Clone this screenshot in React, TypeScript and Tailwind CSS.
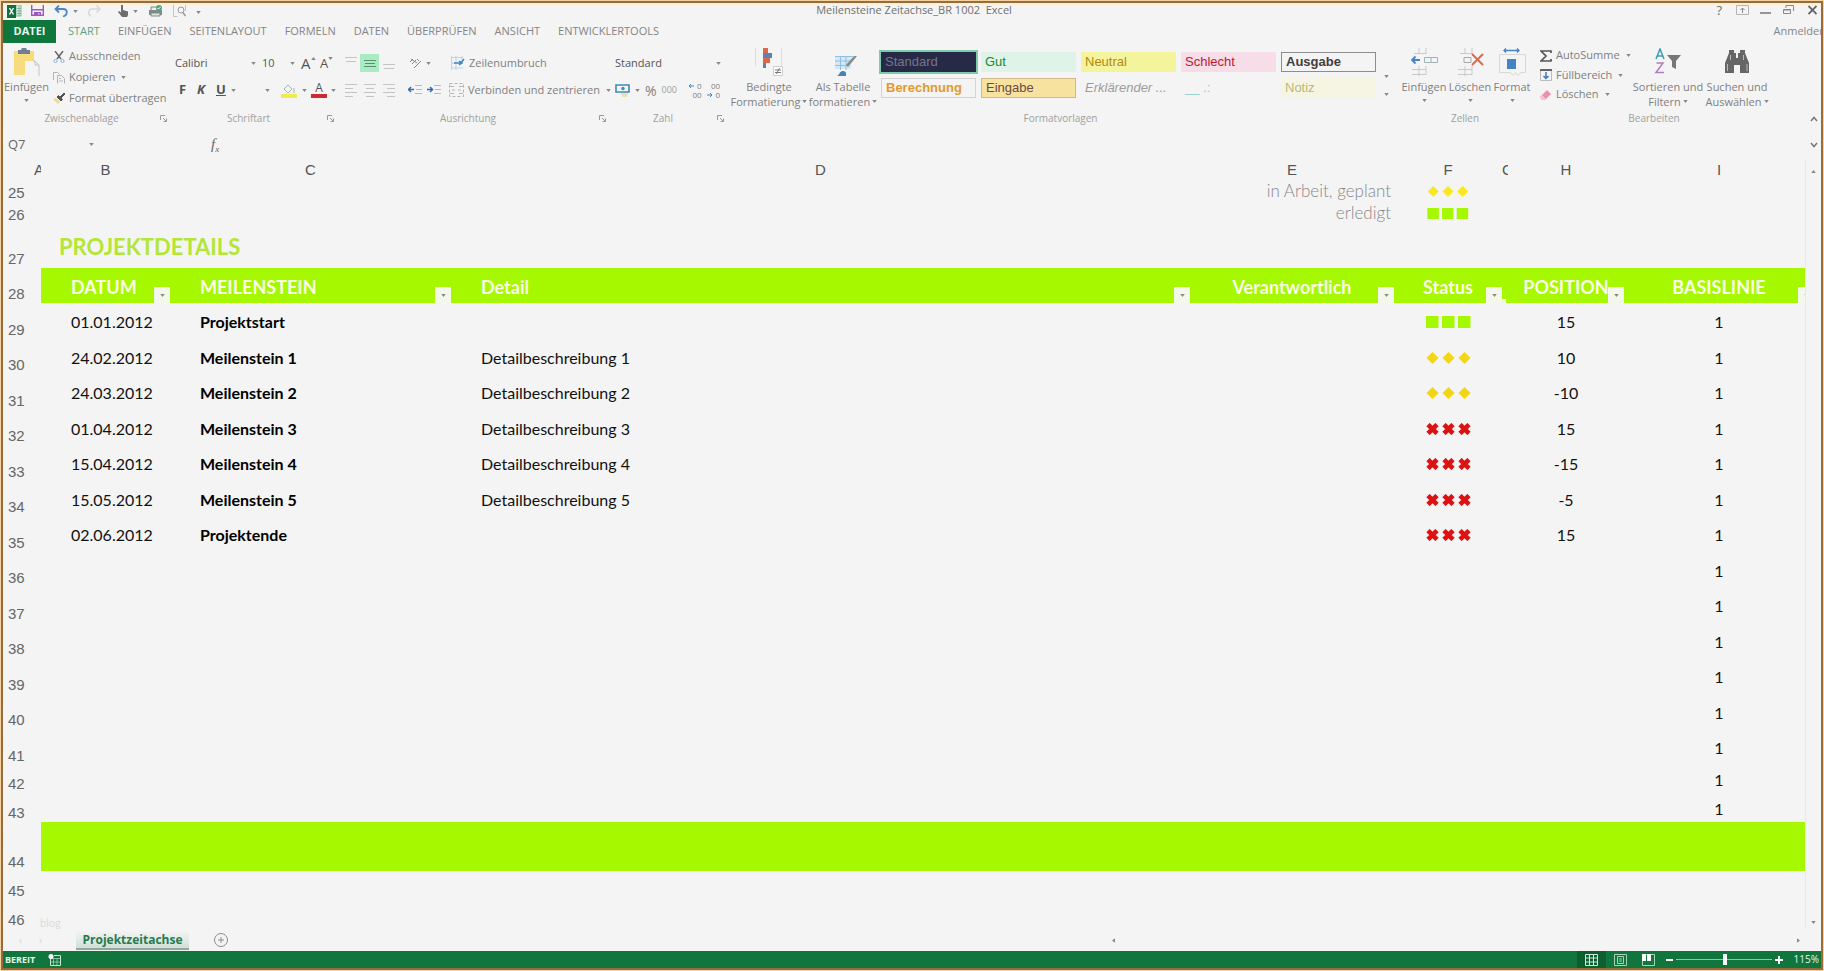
import React from 'react';
import clsx from 'clsx';

type Status = 'done' | 'planned' | 'late';

interface Milestone {
    row: number;
    date?: string;
    name?: string;
    detail?: string;
    status?: Status;
    position?: string;
    height: string;
}

const milestones: Milestone[] = [
    { row: 29, date: '01.01.2012', name: 'Projektstart', status: 'done', position: '15', height: 'h-[36px]' },
    { row: 30, date: '24.02.2012', name: 'Meilenstein 1', detail: 'Detailbeschreibung 1', status: 'planned', position: '10', height: 'h-[35px]' },
    { row: 31, date: '24.03.2012', name: 'Meilenstein 2', detail: 'Detailbeschreibung 2', status: 'planned', position: '-10', height: 'h-[36px]' },
    { row: 32, date: '01.04.2012', name: 'Meilenstein 3', detail: 'Detailbeschreibung 3', status: 'late', position: '15', height: 'h-[35px]' },
    { row: 33, date: '15.04.2012', name: 'Meilenstein 4', detail: 'Detailbeschreibung 4', status: 'late', position: '-15', height: 'h-[36px]' },
    { row: 34, date: '15.05.2012', name: 'Meilenstein 5', detail: 'Detailbeschreibung 5', status: 'late', position: '-5', height: 'h-[35px]' },
    { row: 35, date: '02.06.2012', name: 'Projektende', status: 'late', position: '15', height: 'h-[36px]' },
    { row: 36, height: 'h-[35px]' },
    { row: 37, height: 'h-[36px]' },
    { row: 38, height: 'h-[35px]' },
    { row: 39, height: 'h-[36px]' },
    { row: 40, height: 'h-[35px]' },
    { row: 41, height: 'h-[36px]' },
    { row: 42, height: 'h-[28px]' },
    { row: 43, height: 'h-[29px]' },
];

const tabs = ['START', 'EINFÜGEN', 'SEITENLAYOUT', 'FORMELN', 'DATEN', 'ÜBERPRÜFEN', 'ANSICHT', 'ENTWICKLERTOOLS'];

const cellStyles = [
    { label: 'Standard', look: 'bg-[#262a47] text-[#77768a] outline-2 outline-[#7fc9ac]' },
    { label: 'Gut', look: 'bg-[#e0f3e8] text-[#178a2c]' },
    { label: 'Neutral', look: 'bg-[#f4f49c] text-[#b08a10]' },
    { label: 'Schlecht', look: 'bg-[#f6dde8] text-[#bd1730]' },
    { label: 'Ausgabe', look: 'border border-[#8d8d8d] font-bold text-[#3f3f3f]' },
    { label: 'Berechnung', look: 'border border-[#d4d4d4] font-bold text-[#e39a2b]' },
    { label: 'Eingabe', look: 'border border-[#cdb98a] bg-[#f7e2a0] text-[#6b4a45]' },
    { label: 'Erklärender ...', look: 'italic text-[#9c9c9c]' },
    { label: '__ .:', look: 'text-[#8fcac5] text-[10px]' },
    { label: 'Notiz', look: 'bg-[#f6f5e3] text-[#b9b878]' },
];

const Caret: React.FC<{ className?: string }> = ({ className }) => (
    <svg viewBox="0 0 6 4" className={clsx('h-[3px] w-[5px] shrink-0', className)} fill="#888">
        <path d="M0 0h6L3 4z" />
    </svg>
);

const Marks: React.FC<{ status: Status; className?: string; color?: string }> = ({ status, className = 'h-[12px] w-[45px]', color }) => {
    const xs = [0, 16, 32];
    if (status === 'done') {
        return (
            <svg viewBox="0 0 45 12" className={className} fill={color || '#a6f800'}>
                {xs.map(x => <rect key={x} x={x} width="12.5" height="12" />)}
            </svg>
        );
    }
    if (status === 'planned') {
        return (
            <svg viewBox="0 0 45 12" className={className} fill={color || '#f3d515'}>
                {xs.map(x => <path key={x} d={`M${x + 6.5} 0l6 6-6 6-6-6z`} />)}
            </svg>
        );
    }
    return (
        <svg viewBox="0 0 45 12" className={className} stroke={color || '#dd1313'} strokeWidth="4.6">
            {xs.map(x => <path key={x} d={`M${x + 2} 1.5l9 9M${x + 11} 1.5l-9 9`} />)}
        </svg>
    );
};

const Launcher: React.FC = () => (
    <svg viewBox="0 0 7 7" className="h-[7px] w-[7px]" stroke="#999" fill="none">
        <path d="M.5 5V.5H5M3 3l3 3M6.500 3.500v3h-3" />
    </svg>
);

const Group: React.FC<{ label: string; width: string; pad?: string; launcher?: boolean; children: React.ReactNode }> = ({ label, width, pad, launcher, children }) => (
    <section className={clsx('flex shrink-0 flex-col', width)}>
        <div className={clsx('flex h-[67px]', pad)}>{children}</div>
        <div className="flex h-4 items-center text-[10px] text-[#a0a0a0]">
            <span className="grow text-center">{label}</span>
            {launcher && <button aria-label={`${label} Optionen`} className="mr-[3px]"><Launcher /></button>}
        </div>
    </section>
);

const BigButton: React.FC<{ width: string; icon: React.ReactNode; lines: string[]; caretBelow?: boolean }> = ({ width, icon, lines, caretBelow }) => (
    <button className={clsx('flex shrink-0 flex-col items-center pt-[5px] whitespace-nowrap leading-[15px]', width)}>
        <span className="mb-[3px] h-7">{icon}</span>
        {lines.map((l, i) => (
            <span key={l} className="flex items-center gap-[2px]">
                {l}
                {!caretBelow && i === lines.length - 1 && <Caret />}
            </span>
        ))}
        {caretBelow && <Caret className="mt-[5px]" />}
    </button>
);

const SmallButton: React.FC<{ icon: React.ReactNode; label: string; caret?: boolean; className?: string }> = ({ icon, label, caret, className }) => (
    <button className={clsx('flex items-center gap-1 whitespace-nowrap', className)}>
        {icon}
        {label}
        {caret && <Caret className="ml-[2px]" />}
    </button>
);

const AlignIcon: React.FC<{ d: string; label: string; active?: boolean }> = ({ d, label, active }) => (
    <button aria-label={label} className={clsx('flex h-[18px] w-[19px] items-center justify-center', active && 'bg-[#a9ecc4]')}>
        <svg viewBox="0 0 12 16" className="h-4 w-3" stroke={active ? '#5c8f72' : '#c4c4c4'}><path d={d} /></svg>
    </button>
);

const TitleBar: React.FC = () => (
    <header className="flex h-[17px] items-start border-t-2 border-[#fdf0dc] pl-1 text-[#707070]">
        <div className="flex w-[300px] items-start">
            <svg viewBox="0 0 15 13" className="mr-[9px] h-[13px] w-[15px]">
                <path d="M9 0h5v11H9z" fill="#dff0e5" stroke="#7fb896" />
                <path d="M10 3.500h4M10 6h4M10 8.500h4M12 1v10" stroke="#7fb896" />
                <path d="M0 0h9v13H0z" fill="#12703c" />
                <path d="M2.500 3l4 6.500M6.500 3l-4 6.500" stroke="#fff" strokeWidth="1.400" />
            </svg>
            <svg viewBox="0 0 13 11" className="mr-[10px] h-[11px] w-[13px]">
                <path d="M.7 0v10.300h11.600V0" fill="none" stroke="#9b59c0" strokeWidth="1.400" />
                <path d="M1 4h11v1.500H1zM3 7h7v4H8.500V8.500H7V11H3z" fill="#9b59c0" />
            </svg>
            <svg viewBox="0 0 14 12" className="mr-[5px] h-3 w-[14px]" fill="none" stroke="#4c86c6" strokeWidth="1.800">
                <path d="M5 .5L1.500 4 5 7.500M2 4h7c5 0 5 6 0 7.500" />
            </svg>
            <Caret className="mt-[5px] mr-[10px]" />
            <svg viewBox="0 0 13 12" className="mr-[17px] h-3 w-[13px]" fill="none" stroke="#d8d8d8" strokeWidth="1.500">
                <path d="M8.500 .5L12 4 8.500 7.500M11 4H4C0 4 0 10 3 11" />
            </svg>
            <svg viewBox="0 0 10 12" className="mr-[5px] h-3 w-[10px]" fill="#6d6d6d">
                <path d="M3 0h2v5l5 1.500V10l-1 2H4L0 7l1-1 2 1.500z" />
            </svg>
            <Caret className="mt-[5px] mr-[10px]" />
            <svg viewBox="0 0 15 12" className="mr-[10px] h-3 w-[15px]">
                <path d="M1 5h13v5H1z" fill="#808b88" />
                <path d="M3 5V2h6M3 8h9v3H3z" fill="#dfe5e3" stroke="#808b88" />
                <circle cx="11" cy="3" r="3" fill="#58a57c" />
                <path d="M9.500 3l1 1 2-2" stroke="#fff" fill="none" />
            </svg>
            <svg viewBox="0 0 13 12" className="mr-[10px] h-3 w-[13px]" fill="none" stroke="#9a9a9a">
                <path d="M.5 0v11.500h4M12.500 0v6" stroke="#c5c5c5" />
                <circle cx="8" cy="5" r="3" />
                <path d="M10 7.500l2.500 3.500" strokeWidth="1.500" />
            </svg>
            <Caret className="mt-[6px]" />
        </div>
        <h1 className="grow text-center text-[11px] leading-[10px] whitespace-pre">Meilensteine Zeitachse_BR 1002  Excel</h1>
        <div className="flex w-[300px] items-start justify-end pr-1">
            <button aria-label="Hilfe" className="mr-[14px] text-[13px] leading-[10px]">?</button>
            <button aria-label="Menüband-Anzeigeoptionen" className="mr-[11px]">
                <svg viewBox="0 0 13 10" className="h-[10px] w-[13px]" fill="none" stroke="#888"><path d="M.5.500h12v9H.5z" stroke="#b5b5b5" /><path d="M6.500 8V3M4.500 5l2-2 2 2" /></svg>
            </button>
            <button aria-label="Minimieren" className="mr-[12px]">
                <svg viewBox="0 0 11 10" className="h-[10px] w-[11px]" stroke="#777" strokeWidth="1.500"><path d="M0 8h11" /></svg>
            </button>
            <button aria-label="Wiederherstellen" className="mr-[14px]">
                <svg viewBox="0 0 11 10" className="h-[10px] w-[11px]" fill="none" stroke="#888"><path d="M3 3V.5h7.500V6M.5 4.500h7v4h-7zM.5 5h7" /></svg>
            </button>
            <button aria-label="Schließen">
                <svg viewBox="0 0 9 10" className="h-[10px] w-[9px]" stroke="#666" strokeWidth="1.800"><path d="M.5 1l8 8M8.500 1l-8 8" /></svg>
            </button>
        </div>
    </header>
);

const PasteIcon = (
    <svg viewBox="0 0 28 28" className="h-7 w-7">
        <path d="M1 3h20v11h-9v13H1z" fill="#f6dc7c" />
        <path d="M5 2h3c0-3 6-3 6 0h3v4H5z" fill="#6f7f95" />
        <path d="M12 13h10l4 4v11H12z" fill="#f4f4f4" />
        <path d="M20 13h2l4 4v11M22 13v4h4" fill="none" stroke="#c4c4c4" />
    </svg>
);

const CellsGrid = ({ children }: { children: React.ReactNode }) => (
    <svg viewBox="0 0 27 28" className="h-7 w-[27px]" fill="none">
        <path d="M3 5.500h12M8 0v6M15 0v6M1 21.500h14M1 26.500h14M8 18v10M15 18v9" stroke="#c9c9c9" />
        {children}
    </svg>
);

const Ribbon: React.FC = () => (
    <div className="flex h-[88px] shrink-0 text-[11px] text-[#808080]">
        <Group label="Zwischenablage" width="w-[167px]" launcher>
            <BigButton width="w-[47px]" icon={PasteIcon} lines={['Einfügen']} caretBelow />
            <div className="flex flex-col items-start pt-[3px] pl-[3px]">
                <SmallButton className="h-[21px]" label="Ausschneiden" icon={
                    <svg viewBox="0 0 12 12" className="h-3 w-3" fill="none">
                        <path d="M2 0l6 8M10 0L4 8" stroke="#666" strokeWidth="1.500" />
                        <circle cx="2.500" cy="10" r="1.600" stroke="#8fb4d8" /><circle cx="9.500" cy="10" r="1.600" stroke="#8fb4d8" />
                    </svg>
                } />
                <SmallButton className="h-[21px]" label="Kopieren" caret icon={
                    <svg viewBox="0 0 12 12" className="h-3 w-3" fill="none" stroke="#b3b3b3"><path d="M.5 8V.5h4l2 2M4.500 11.500v-8h4l3 3v5M6 6.500h2M6 9h4" /></svg>
                } />
                <SmallButton className="h-[21px]" label="Format übertragen" icon={
                    <svg viewBox="0 0 12 12" className="h-3 w-3"><path d="M0 6l5 5 2-2-4-4z" fill="#f2d98a" /><path d="M4 4l4 4 1.500-1.500-4-4zM7 4l4-4 1 1-4 4z" fill="#555" stroke="#555" /></svg>
                } />
            </div>
        </Group>
        <Group label="Schriftart" width="w-[167px]" launcher>
            <div className="flex flex-col pt-[9px] pl-[5px]">
                <div className="flex h-[22px] items-center text-[#555]">
                    <div className="flex w-[87px] items-center">
                        <select aria-label="Schriftart" className="w-[76px] appearance-none outline-none"><option>Calibri</option></select>
                        <Caret />
                    </div>
                    <div className="flex w-[39px] items-center">
                        <select aria-label="Schriftgrad" className="w-[28px] appearance-none outline-none"><option>10</option></select>
                        <Caret />
                    </div>
                    <button aria-label="Schriftgrad vergrößern" className="flex w-[19px] items-start text-[15px] leading-4">A<Caret className="mt-[2px] rotate-180" /></button>
                    <button aria-label="Schriftgrad verkleinern" className="flex items-start text-[13px] leading-4">A<Caret className="mt-[2px]" /></button>
                </div>
                <div className="flex h-[32px] items-center text-[13px] font-bold text-[#555]">
                    <button className="w-[22px] pl-1 text-left">F</button>
                    <button className="w-[19px] text-left italic">K</button>
                    <button className="w-[15px] text-left underline">U</button>
                    <Caret className="mr-[29px]" />
                    <Caret className="mr-[11px]" />
                    <button aria-label="Füllfarbe" className="mr-[5px]">
                        <svg viewBox="0 0 16 15" className="h-[15px] w-4"><path d="M3 6l4-4 4 4-4 4zM13 5v5" fill="none" stroke="#a9b3bd" /><path d="M0 11h16v4H0z" fill="#eeee4a" /></svg>
                    </button>
                    <Caret className="mr-[4px]" />
                    <button className="flex h-[16px] w-4 flex-col items-center border-b-4 border-[#cc2a30] text-[12px] leading-3 font-normal">A</button>
                    <Caret className="ml-[4px]" />
                </div>
            </div>
        </Group>
        <Group label="Ausrichtung" width="w-[272px]" launcher>
            <div className="flex flex-col pt-[9px] pl-[4px]">
                <div className="flex h-[22px] items-center">
                    <AlignIcon label="Oben ausrichten" d="M0 2.500h12M1 6.500h10" />
                    <AlignIcon label="Zentriert ausrichten" active d="M0 5.500h12M1 8.500h10M0 11.500h12" />
                    <AlignIcon label="Unten ausrichten" d="M0 9.500h12M1 13.500h10" />
                    <button aria-label="Ausrichtung" className="ml-[11px] flex w-[41px] items-center gap-[5px]">
                        <svg viewBox="0 0 12 12" className="h-3 w-3" fill="none" stroke="#888"><path d="M1 5l3-3M3 7l4-4M2 2l6 4M5 11l7-7M8 2l2 2" /></svg>
                        <Caret />
                    </button>
                    <SmallButton label="Zeilenumbruch" icon={
                        <svg viewBox="0 0 15 14" className="h-[14px] w-[15px]" fill="none"><path d="M1 1.500h12M1 7h5M1 12h12M1.500 0v14M6 0v14M12 0v5" stroke="#bcd3e6" /><path d="M4 7h7l3-4M9 5l3 2-3 2" stroke="#3f83c4" strokeWidth="1.400" /></svg>
                    } />
                </div>
                <div className="flex h-[32px] items-center">
                    <AlignIcon label="Linksbündig" d="M0 2.500h12M0 6.500h8M0 10.500h12M0 14.500h8" />
                    <AlignIcon label="Zentriert" d="M0 2.500h12M2 6.500h8M0 10.500h12M2 14.500h8" />
                    <AlignIcon label="Rechtsbündig" d="M0 2.500h12M4 6.500h8M0 10.500h12M4 14.500h8" />
                    <button aria-label="Einzug verkleinern" className="ml-[10px]">
                        <svg viewBox="0 0 14 12" className="h-3 w-[14px]" stroke="#bbb"><path d="M7 1.500h7M8 5.500h6M7 9.500h7" /><path d="M0 5.500h6M3 3L.5 5.500 3 8" stroke="#2f6fb0" strokeWidth="1.500" fill="none" /></svg>
                    </button>
                    <button aria-label="Einzug vergrößern" className="mr-[8px] ml-[5px]">
                        <svg viewBox="0 0 14 12" className="h-3 w-[14px]" stroke="#bbb"><path d="M7 1.500h7M8 5.500h6M7 9.500h7" /><path d="M0 5.500h6M3 3l2.500 2.500L3 8" stroke="#2f6fb0" strokeWidth="1.500" fill="none" /></svg>
                    </button>
                    <SmallButton label="Verbinden und zentrieren" caret icon={
                        <svg viewBox="0 0 15 14" className="h-[14px] w-[15px]" fill="none" stroke="#b5b5b5"><path d="M.5.500h14v13H.5z" strokeDasharray="3 2" /><path d="M1 3.500h4M10 3.500h4M1 10.500h4M10 10.500h4M3 7h3M9 7h3" /></svg>
                    } />
                </div>
            </div>
        </Group>
        <Group label="Zahl" width="w-[118px]" launcher>
            <div className="flex flex-col pt-[9px] pl-[6px]">
                <div className="flex h-[22px] items-center text-[#555]">
                    <select aria-label="Zahlenformat" className="w-[101px] appearance-none outline-none"><option>Standard</option></select>
                    <Caret />
                </div>
                <div className="flex h-[32px] items-center">
                    <svg viewBox="0 0 16 14" className="mr-[4px] h-[14px] w-4" fill="none"><path d="M1 2h13v7H1z" stroke="#3c8bb8" strokeWidth="1.600" /><circle cx="8" cy="5.500" r="1.700" fill="#3c8bb8" /><path d="M6 11h7M7 13h5" stroke="#ecd9a0" strokeWidth="1.500" /></svg>
                    <Caret className="mr-[5px]" />
                    <button className="mr-[5px] text-[14px]">%</button>
                    <button className="mr-[11px] text-[9px] text-[#a0a0a0]">000</button>
                    <button aria-label="Dezimalstelle hinzufügen" className="mr-[5px] flex flex-col items-end text-[8px] leading-[9px]">
                        <span className="flex items-center gap-[3px]"><svg viewBox="0 0 6 6" className="h-[6px] w-[6px]" fill="none" stroke="#3f83c4"><path d="M6 3H1M3 1L1 3l2 2" /></svg>0</span>
                        <span>00</span>
                    </button>
                    <button aria-label="Dezimalstelle löschen" className="flex flex-col items-end text-[8px] leading-[9px]">
                        <span>00</span>
                        <span className="flex items-center gap-[3px]"><svg viewBox="0 0 6 6" className="h-[6px] w-[6px]" fill="none" stroke="#3f83c4"><path d="M0 3h5M3 1l2 2-2 2" /></svg>0</span>
                    </button>
                </div>
            </div>
        </Group>
        <Group label="Formatvorlagen" width="w-[667px]">
            <BigButton width="w-[84px]" lines={['Bedingte', 'Formatierung']} icon={
                <svg viewBox="0 0 28 28" className="h-7 w-7">
                    <path d="M.5 0v18M26.500 0v18" stroke="#ddd" />
                    <path d="M8 0h5v5H8zM8 10h7v5H8z" fill="#d9694a" /><path d="M8 5h9v5H8zM8 15h3v5H8z" fill="#5f7fb5" />
                    <path d="M18.500 18.500h9v9h-9z" fill="#fff" stroke="#ccc" /><path d="M20 22h6M20 24.500h6M24.500 20l-3 6" stroke="#777" />
                </svg>
            } />
            <BigButton width="w-[64px]" lines={['Als Tabelle', 'formatieren']} icon={
                <svg viewBox="0 0 28 28" className="h-7 w-7">
                    <path d="M6 8h16v13H6z" fill="#d4e8f6" /><path d="M6 8.500h18M6 13h16M6 17.500h13M11.500 8v14M17 8v14" stroke="#90bfe0" fill="none" />
                    <path d="M28 8l-9 11-2-2L25 8z" fill="#858a8c" /><path d="M8 28c3-1 2-5 6-5 4 0 3 4 3 5z" fill="#4382bd" />
                </svg>
            } />
            <div className="ml-[6px] grid w-[500px] grid-cols-5 content-start gap-y-[6px] pt-[9px]">
                {cellStyles.map(s => (
                    <button key={s.label} className={clsx('mr-[5px] h-5 truncate pl-1 text-left font-["Liberation_Sans",Arial,sans-serif] text-[13px] leading-[18px]', s.look)}>{s.label}</button>
                ))}
            </div>
            <div className="flex flex-col gap-[15px] pt-[32px] pl-[3px]">
                <Caret />
                <Caret />
            </div>
        </Group>
        <Group label="Zellen" width="w-[142px]" pad="pl-[5px]">
            <BigButton width="w-[50px]" lines={['Einfügen']} caretBelow icon={<CellsGrid><path d="M13.500 9.500h13v5h-13zM20 9v6" stroke="#9fb3b5" /><path d="M1 12h8M4.500 8.500L1 12l3.500 3.500" stroke="#4583c4" strokeWidth="1.800" /></CellsGrid>} />
            <BigButton width="w-[42px]" lines={['Löschen']} caretBelow icon={<CellsGrid><path d="M7 9.500h7v5H7z" stroke="#aaa" /><path d="M15 6l11 11M26 6L15 17" stroke="#dc6a4a" strokeWidth="2" /></CellsGrid>} />
            <BigButton width="w-[42px]" lines={['Format']} caretBelow icon={
                <svg viewBox="0 0 27 28" className="h-7 w-[27px]" fill="none"><path d="M5 2.500h15M7 .5l-2 2 2 2M18 .5l2 2-2 2" stroke="#4583c4" strokeWidth="1.300" /><path d="M.5 6.500h26v18h-5c-1 3-4 3-5 0-1 3-4 3-5 0h-11z" stroke="#d8d8d8" /><path d="M8 11h9v10H8z" fill="#4583c4" /></svg>
            } />
        </Group>
        <Group label="Bearbeiten" width="w-[236px]">
            <div className="flex w-[96px] flex-col items-start pt-[3px] pl-[4px]">
                <SmallButton className="h-[19px]" label="AutoSumme" caret icon={<svg viewBox="0 0 12 12" className="h-3 w-3" fill="none" stroke="#555" strokeWidth="1.700"><path d="M11 3V1H1l5 5-5 5h10V9" /></svg>} />
                <SmallButton className="h-[20px]" label="Füllbereich" caret icon={<svg viewBox="0 0 12 12" className="h-3 w-3" fill="none"><path d="M0 1h12" stroke="#666" strokeWidth="2" /><path d="M.5 2v9.500h11V2" stroke="#bbb" /><path d="M6 3v7M3.500 7L6 9.500 8.500 7" stroke="#3b7cc0" strokeWidth="1.500" /></svg>} />
                <SmallButton className="h-[19px]" label="Löschen" caret icon={<svg viewBox="0 0 12 12" className="h-3 w-3"><path d="M0 8l7-7 4 4-6 6H2z" fill="#ee8fae" /><path d="M0 8l2-2 4 4-1 1H2z" fill="#f6c3d2" /></svg>} />
            </div>
            <BigButton width="w-[72px]" lines={['Sortieren und', 'Filtern']} icon={
                <svg viewBox="0 0 28 28" className="h-7 w-7" fill="none" strokeWidth="1.500"><path d="M2 11l4-10 4 10M3.500 8h5" stroke="#3a9cb4" /><path d="M2.500 15H9l-7 9.500h8" stroke="#b07cc6" /><path d="M13 7h14l-5 6v8l-4-2v-6z" fill="#777" /></svg>
            } />
            <BigButton width="w-[66px]" lines={['Suchen und', 'Auswählen']} icon={
                <svg viewBox="0 0 28 28" className="h-7 w-7" fill="#666"><path d="M6 2h5v3h2v5h2V5h2V2h5v3l4 10v10h-9v-8h-6v8H2V15L6 5z" /><path d="M4.500 16v7M24 16v7M7.500 7v5M20.500 7v5" stroke="#bbb" /></svg>
            } />
        </Group>
        <div className="flex grow items-end justify-end pr-[3px] pb-[9px]">
            <button aria-label="Menüband reduzieren">
                <svg viewBox="0 0 8 6" className="h-[6px] w-2" fill="none" stroke="#777" strokeWidth="1.500"><path d="M1 5l3-3.500L7 5" /></svg>
            </button>
        </div>
    </div>
);

const FormulaBar: React.FC = () => (
    <div className="flex h-[29px] shrink-0 items-center pb-[2px] pl-[5px] text-[#666]">
        <input aria-label="Namenfeld" defaultValue="Q7" className="w-[81px] bg-transparent text-[13px] outline-none" />
        <Caret />
        <span className="ml-[117px] font-['Liberation_Serif',serif] text-[15px] italic">f<sub className="text-[9px]">x</sub></span>
        <input aria-label="Bearbeitungsleiste" className="ml-2 grow bg-transparent outline-none" />
        <svg viewBox="0 0 8 6" className="mr-[3px] h-[6px] w-2" fill="none" stroke="#777" strokeWidth="1.500"><path d="M1 1l3 3.500L7 1" /></svg>
    </div>
);

const HeaderCell: React.FC<{ label?: string; className?: string }> = ({ label, className }) => (
    <th className={clsx('relative bg-[#a6f800] p-0 pt-[2px] text-[18px] font-bold text-[#fbffe8]', className)}>
        {label}
        <button aria-label={`${label} filtern`} className="absolute right-0 bottom-0 flex h-4 w-4 items-center justify-center bg-[#f4f8ea]"><Caret /></button>
    </th>
);

const RowNumber: React.FC<{ n: number }> = ({ n }) => (
    <th scope="row" className="p-0 pl-[5px] text-left align-bottom font-['Liberation_Sans',Arial,sans-serif] text-[15px] leading-[18px] font-normal text-[#666]">{n}</th>
);

const Sheet: React.FC = () => (
    <div className="flex grow">
        <div className="min-w-0 grow overflow-hidden">
            <table className="w-[calc(100%+9px)] table-fixed border-collapse font-[Lato,'Open_Sans',sans-serif] text-[16px] leading-[18px] text-[#111]">
                <colgroup>
                    <col className="w-[31px]" />
                    <col className="w-[7px]" />
                    <col className="w-[129px]" />
                    <col className="w-[281px]" />
                    <col />
                    <col className="w-[204px]" />
                    <col className="w-[108px]" />
                    <col className="w-[6px]" />
                    <col className="w-[116px]" />
                    <col className="w-[190px]" />
                </colgroup>
                <thead>
                    <tr className="h-5 font-['Liberation_Sans',Arial,sans-serif] text-[15px] text-[#555]">
                        <td />
                        {['A', 'B', 'C', 'D', 'E', 'F', 'G', 'H', 'I'].map(c => (
                            <th key={c} scope="col" className={clsx('p-0 text-center font-normal', (c === 'A' || c === 'G') && 'overflow-hidden')}>{c}</th>
                        ))}
                    </tr>
                </thead>
                <tbody>
                    <tr className="h-[22px]">
                        <RowNumber n={25} />
                        <td colSpan={4} />
                        <td className="p-0 pr-[3px] text-right text-[17px] font-light text-[#888]">in Arbeit, geplant</td>
                        <td className="p-0"><Marks status="planned" color="#f8e81e" className="mx-auto h-[11px] w-[42px]" /></td>
                        <td colSpan={3} />
                    </tr>
                    <tr className="h-[22px]">
                        <RowNumber n={26} />
                        <td colSpan={4} />
                        <td className="p-0 pr-[3px] text-right text-[17px] font-light text-[#888]">erledigt</td>
                        <td className="p-0"><Marks status="done" className="mx-auto h-[11px] w-[42px]" /></td>
                        <td colSpan={3} />
                    </tr>
                    <tr className="h-11">
                        <RowNumber n={27} />
                        <td />
                        <td colSpan={8} className="p-0 pt-[2px] pl-[18px] text-[22px] leading-6 font-bold text-[#b3e636]">PROJEKTDETAILS</td>
                    </tr>
                    <tr className="h-[35px]">
                        <RowNumber n={28} />
                        <td />
                        <HeaderCell label="DATUM" className="pl-[30px] text-left" />
                        <HeaderCell label="MEILENSTEIN" className="pl-[30px] text-left" />
                        <HeaderCell label="Detail" className="pl-[30px] text-left" />
                        <HeaderCell label="Verantwortlich" />
                        <HeaderCell label="Status" />
                        <td className="bg-[#a6f800] p-0 align-bottom"><div className="h-1 w-1 bg-[#f4f8ea]" /></td>
                        <HeaderCell label="POSITION" />
                        <HeaderCell label="BASISLINIE" />
                    </tr>
                    {milestones.map(m => (
                        <tr key={m.row} className={m.height}>
                            <RowNumber n={m.row} />
                            <td />
                            <td className="p-0 pt-[2px] pl-[30px]">{m.date}</td>
                            <td className="p-0 pt-[2px] pl-[30px] font-bold text-black">{m.name}</td>
                            <td className="p-0 pt-[2px] pl-[30px]">{m.detail}</td>
                            <td />
                            <td className="p-0 pt-[2px]">{m.status && <Marks status={m.status} className="mx-auto h-[12px] w-[45px]" />}</td>
                            <td />
                            <td className="p-0 pt-[2px] text-center">{m.position}</td>
                            <td className="p-0 pt-[2px] text-center">1</td>
                        </tr>
                    ))}
                    <tr className="h-[49px]">
                        <RowNumber n={44} />
                        <td />
                        <td colSpan={8} className="bg-[#a6f800]" />
                    </tr>
                    <tr className="h-[29px]"><RowNumber n={45} /><td colSpan={9} /></tr>
                    <tr className="h-[29px]">
                        <RowNumber n={46} />
                        <td colSpan={9} className="p-0 pl-[6px] align-bottom text-[11px] leading-3 text-[#dcdcdc]">blog</td>
                    </tr>
                </tbody>
            </table>
        </div>
        <div className="flex w-4 shrink-0 flex-col items-center justify-between border-l border-[#e9e9e9] pt-[10px] pb-[5px]">
            <Caret className="rotate-180" />
            <Caret />
        </div>
    </div>
);

const SheetTabs: React.FC = () => (
    <div className="flex h-[22px] shrink-0 items-center">
        <div className="flex w-[73px] gap-[17px] pl-4 text-[10px] text-[#d5d5d5]"><span>‹</span><span>›</span></div>
        <button className="mr-[25px] h-[19px] w-[113px] border-b-2 border-[#8fa99b] bg-linear-to-b from-[#f4f4f4] to-[#cfe0d6] text-[12px] leading-[17px] font-bold text-[#277a52]">Projektzeitachse</button>
        <button aria-label="Neues Blatt">
            <svg viewBox="0 0 14 14" className="h-[14px] w-[14px]" fill="none" stroke="#8a8a8a"><circle cx="7" cy="7" r="6.500" /><path d="M7 4v6M4 7h6" /></svg>
        </button>
        <div className="ml-auto flex w-[710px] items-center justify-between pr-5">
            <Caret className="rotate-90" />
            <Caret className="-rotate-90" />
        </div>
    </div>
);

const StatusBar: React.FC = () => (
    <footer className="flex h-[17px] shrink-0 items-center bg-[#10763d] pl-[2px] text-[9px] font-bold text-[#e6f5ea]">
        <span className="w-[43px]">BEREIT</span>
        <svg viewBox="0 0 13 12" className="h-3 w-[13px]" fill="none" stroke="#c9e6d4"><path d="M2.500 4v7.500h10v-10H6" /><path d="M3 4.500h9M5.500 5v6M9 5v6M3 8h9" opacity=".6" /><circle cx="3" cy="2.500" r="2.500" fill="#fff" stroke="none" /></svg>
        <div className="ml-auto flex items-center">
            <button aria-label="Normal" className="flex h-[17px] w-[29px] items-center justify-center bg-[#0b5f30]">
                <svg viewBox="0 0 13 12" className="h-3 w-[13px]" fill="none" stroke="#cfe8d8"><path d="M.5.500h12v11H.5zM.5 4h12M.5 8h12M4.500.500v11M8.500.500v11" /></svg>
            </button>
            <button aria-label="Seitenlayout" className="flex w-[28px] justify-center">
                <svg viewBox="0 0 13 12" className="h-3 w-[13px]" fill="none" stroke="#a8d3b9"><path d="M.5.500h12v11H.5zM3.500 2.500h6v7h-6zM5 5h3M5 7h3" /></svg>
            </button>
            <button aria-label="Umbruchvorschau" className="flex w-[29px] justify-center">
                <svg viewBox="0 0 13 12" className="h-3 w-[13px]" fill="none" stroke="#a8d3b9"><path d="M.5.500h12v11H.5z" /><path d="M0 0h4v7H0zM5 0h4v7H5z" fill="#fff" stroke="none" /></svg>
            </button>
            <button aria-label="Verkleinern" className="ml-[3px] h-[2px] w-[7px] bg-white" />
            <input type="range" aria-label="Zoom" min="10" max="200" defaultValue="107" className="mx-[3px] h-px w-[96px] appearance-none bg-[#8fcaa6] [&::-webkit-slider-thumb]:h-[11px] [&::-webkit-slider-thumb]:w-1 [&::-webkit-slider-thumb]:appearance-none [&::-webkit-slider-thumb]:bg-white" />
            <button aria-label="Vergrößern">
                <svg viewBox="0 0 8 8" className="h-2 w-2" stroke="#fff" strokeWidth="2"><path d="M4 0v8M0 4h8" /></svg>
            </button>
            <span className="w-[38px] pr-[2px] text-right text-[10px] font-normal">115%</span>
        </div>
    </footer>
);

export default function App() {
    return (
        <div className="min-h-screen border border-[#f3d2a4] bg-[#f4f4f4] font-['Open_Sans','Noto_Sans',sans-serif]">
            <div className="flex min-h-[calc(100vh-2px)] flex-col overflow-hidden border-2 border-[#9a6a38]">
                <TitleBar />
                <nav className="flex h-[23px] shrink-0 items-center gap-[18px] text-[11px] text-[#858585]">
                    <button className="-mr-[6px] h-[23px] w-[53px] bg-[#0f763c] font-bold text-[#e9f6ee]">DATEI</button>
                    {tabs.map(t => (
                        <button key={t} className={clsx(t === 'START' && 'text-[#5ba283]')}>{t}</button>
                    ))}
                    <a href="#anmelden" className="-mr-[5px] ml-auto">Anmelden</a>
                </nav>
                <Ribbon />
                <FormulaBar />
                <Sheet />
                <SheetTabs />
                <StatusBar />
            </div>
        </div>
    );
}
